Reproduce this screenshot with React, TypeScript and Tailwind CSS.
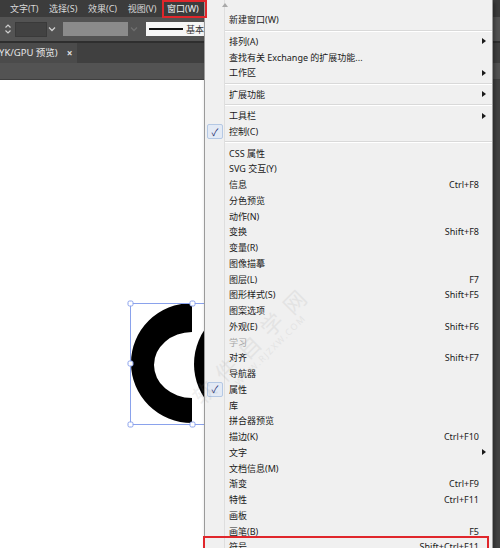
import React from "react";

type Item =
  | { sep: true }
  | {
      sep?: false;
      label: string;
      shortcut?: string;
      sub?: boolean;
      check?: boolean;
      disabled?: boolean;
    };

const items: Item[] = [
  { label: "新建窗口(W)" },
  { sep: true },
  { label: "排列(A)", sub: true },
  { label: "查找有关 Exchange 的扩展功能..." },
  { label: "工作区", sub: true },
  { sep: true },
  { label: "扩展功能", sub: true },
  { sep: true },
  { label: "工具栏", sub: true },
  { label: "控制(C)", check: true },
  { sep: true },
  { label: "CSS 属性" },
  { label: "SVG 交互(Y)" },
  { label: "信息", shortcut: "Ctrl+F8" },
  { label: "分色预览" },
  { label: "动作(N)" },
  { label: "变换", shortcut: "Shift+F8" },
  { label: "变量(R)" },
  { label: "图像描摹" },
  { label: "图层(L)", shortcut: "F7" },
  { label: "图形样式(S)", shortcut: "Shift+F5" },
  { label: "图案选项" },
  { label: "外观(E)", shortcut: "Shift+F6" },
  { label: "学习", disabled: true },
  { label: "对齐", shortcut: "Shift+F7" },
  { label: "导航器" },
  { label: "属性", check: true },
  { label: "库" },
  { label: "拼合器预览" },
  { label: "描边(K)", shortcut: "Ctrl+F10" },
  { label: "文字", sub: true },
  { label: "文档信息(M)" },
  { label: "渐变", shortcut: "Ctrl+F9" },
  { label: "特性", shortcut: "Ctrl+F11" },
  { label: "画板" },
  { label: "画笔(B)", shortcut: "F5" },
  { label: "符号", shortcut: "Shift+Ctrl+F11" },
];

function Chevron({ color }: { color: string }) {
  return (
    <svg width="8" height="6" viewBox="0 0 8 6">
      <path d="M1 1.5 L4 4.5 L7 1.5" fill="none" stroke={color} strokeWidth="1.3" />
    </svg>
  );
}

function Menu() {
  return (
    <div className="absolute left-[204px] top-0 w-[289px] h-[560px] bg-[#f0f0f0] border-l border-r border-[#9a9a9a] shadow-[2px_2px_4px_rgba(0,0,0,0.35)] flex flex-col text-[9px] leading-none text-[#1a1a1a]">
      <div className="relative h-[12px] flex shrink-0">
        <div className="w-[20px] border-r border-[#dedede] h-full" />
        <div className="absolute left-[17px] top-[3px] w-0 h-0 border-x-[3.5px] border-x-transparent border-b-[4px] border-b-[#a9a9a9]" />
      </div>
      {items.map((it, i) =>
        it.sep ? (
          <div key={i} className="h-[5.75px] flex shrink-0">
            <div className="w-[20px] border-r border-[#dedede] h-full" />
            <div className="flex-1 flex flex-col justify-center">
              <div className="h-px bg-[#d9d9d9]" />
              <div className="h-px bg-white" />
            </div>
          </div>
        ) : (
          <div key={i} className="h-[15.75px] flex shrink-0">
            <div className="w-[20px] border-r border-[#dedede] h-full flex items-center pl-[2px]">
              {it.check && (
                <div className="w-[16px] h-[15px] bg-[#e3eaf5] border border-[#b4c8e4] rounded-[2px] flex items-center justify-center text-[10px] text-[#1c2b6e]">
                  ✓
                </div>
              )}
            </div>
            <div
              className={
                "flex-1 pl-[4px] flex items-center whitespace-nowrap " +
                (it.disabled ? "text-[#a4a4a4]" : "")
              }
            >
              {it.label}
            </div>
            {it.shortcut && (
              <div className="flex items-center whitespace-nowrap text-[#1a1a1a]">{it.shortcut}</div>
            )}
            <div className="w-[13px] flex items-center pl-[3px]">
              {it.sub && (
                <div className="w-0 h-0 border-y-[3px] border-y-transparent border-l-[4px] border-l-[#1a1a1a]" />
              )}
            </div>
          </div>
        )
      )}
    </div>
  );
}

function Artwork() {
  return (
    <svg width="205" height="468" viewBox="0 0 205 468" className="block">
      <path
        d="M192 223 A61 60 0 0 0 192 343 L192 318 A38 33 0 0 1 192 252 Z"
        fill="#000"
      />
      <circle cx="255" cy="284" r="61" fill="#000" />
      <rect x="130.5" y="223.5" width="90" height="121" fill="none" stroke="#8aa2ec" strokeWidth="1" />
      {[
        [130.5, 223.5],
        [192.5, 223.5],
        [130.5, 283.5],
        [130.5, 344.5],
        [192.5, 344.5],
      ].map(([x, y], i) => (
        <rect
          key={i}
          x={x - 2.5}
          y={y - 2.5}
          width="5"
          height="5"
          rx="1.5"
          fill="#fff"
          stroke="#8aa2ec"
          strokeWidth="1"
        />
      ))}
    </svg>
  );
}

export default function App() {
  return (
    <div className="relative w-[500px] h-[548px] overflow-hidden bg-white font-['Noto_Sans','Noto_Sans_CJK_SC',sans-serif]">
      <div className="flex flex-col h-full">
        {/* menu bar */}
        <div className="h-[17px] shrink-0 bg-[#3c3c3c] flex items-center pl-[10px] gap-[10.6px] text-[9px] leading-none text-[#d8d8d8]">
          <span>文字(T)</span>
          <span>选择(S)</span>
          <span>效果(C)</span>
          <span>视图(V)</span>
          <span className="text-[#f0f0f0]">窗口(W)</span>
        </div>
        {/* control bar */}
        <div className="h-[24px] shrink-0 bg-[#535353] flex items-center">
          <div className="ml-[3px] w-[10px] flex flex-col items-center">
            <svg width="8" height="12" viewBox="0 0 8 12">
              <path d="M1.5 4.5 L4 2 L6.5 4.5" fill="none" stroke="#cfcfcf" strokeWidth="1.2" />
              <path d="M1.5 7.5 L4 10 L6.5 7.5" fill="none" stroke="#cfcfcf" strokeWidth="1.2" />
            </svg>
          </div>
          <div className="ml-[2px] w-[32px] h-[15px] bg-[#424242] border border-[#3a3a3a]" />
          <div className="ml-[1px] w-[8px] flex justify-center">
            <Chevron color="#d0d0d0" />
          </div>
          <div className="ml-[7px] w-[65px] h-[14px] bg-[#8b8b8b]" />
          <div className="ml-[2px] w-[8px] flex justify-center">
            <Chevron color="#6f6f6f" />
          </div>
          <div className="ml-[8px] w-[70px] h-[14px] bg-[#f6f6f6] flex items-center pl-[3px]">
            <div className="w-[34px] h-[1.5px] bg-[#111]" />
            <span className="ml-[3px] text-[9px] leading-none text-[#333]">基本</span>
          </div>
        </div>
        {/* tab bar */}
        <div className="h-[22px] shrink-0 bg-[#404040] border-t-2 border-[#2e2e2e] flex">
          <div className="w-[77px] h-full bg-[#4b4b4b] flex items-center text-[9.5px] leading-none text-[#e6e6e6] whitespace-nowrap">
            <span className="-ml-[1px]">YK/GPU 预览)</span>
            <span className="ml-[9px] text-[10px] font-bold text-[#e0e0e0]">×</span>
          </div>
        </div>
        {/* ruler strip */}
        <div className="h-[17px] shrink-0 bg-[#535353] border-b border-[#3f3f3f]" />
        {/* canvas */}
        <div className="flex-1 flex">
          <div className="flex-1 bg-white overflow-hidden">
            <Artwork />
          </div>
          <div className="w-[8px] bg-[#424242] border-l border-[#2c2c2c]" />
        </div>
      </div>

      <Menu />

      {/* watermark */}
      <div className="pointer-events-none absolute left-[188px] top-[392px] rotate-[-45deg] origin-top-left flex flex-col items-start text-[#8a8a8a] opacity-[0.12] whitespace-nowrap">
        <span className="text-[22px] leading-none tracking-[10px]">软件自学网</span>
        <span className="ml-[40px] mt-[2px] text-[9px] leading-none tracking-[1.5px]">WWW.RJZXW.COM</span>
      </div>

      {/* annotation boxes */}
      <div className="absolute left-[162px] top-0 w-[45px] h-[18px] border-2 border-[#e0262b]" />
      <div className="absolute left-[203px] top-[536px] w-[286px] h-[20px] border-2 border-[#e0262b]" />
    </div>
  );
}
